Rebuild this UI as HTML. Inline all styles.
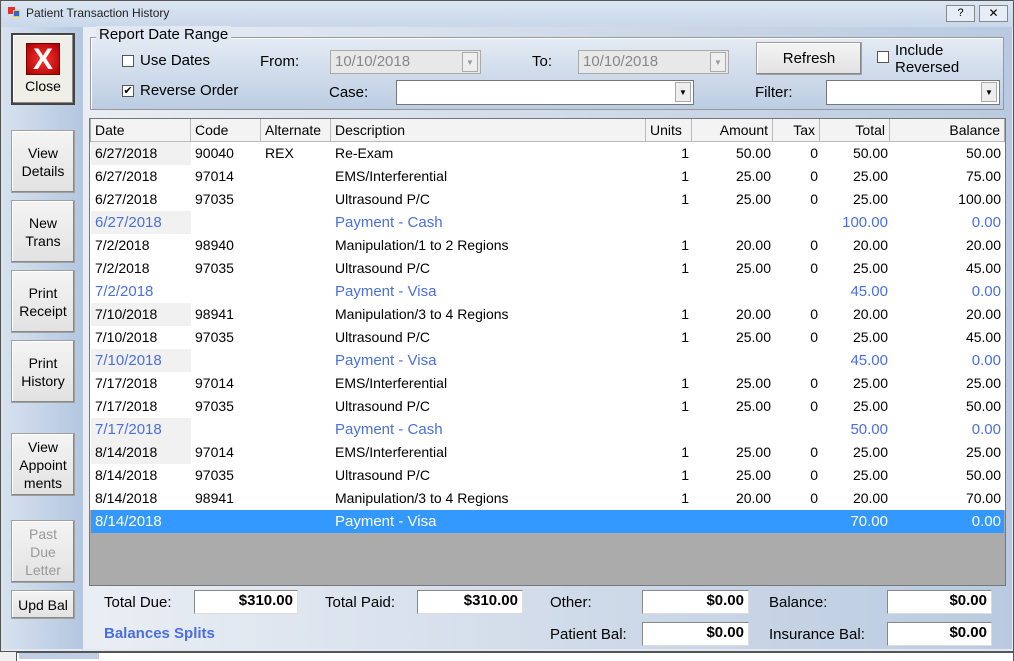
<!DOCTYPE html>
<html><head><style>
*{margin:0;padding:0;box-sizing:border-box}
body{width:1014px;height:661px;background:#f0f0f0;font-family:"Liberation Sans",sans-serif;font-size:14px;position:relative;overflow:hidden;color:#000}
.a{position:absolute}
.btn{position:absolute;background:linear-gradient(#f4f4f4,#e2e2e2);border:1px solid #a0a0a0;box-shadow:inset -1px -1px 0 #888,inset 1px 1px 0 #fff;text-align:center;font-size:14px;line-height:18px;display:flex;align-items:center;justify-content:center}
.cb{position:absolute;width:12px;height:12px;border:1px solid #555;background:#fff;font-size:11px;line-height:10px;text-align:center}
.box{position:absolute;background:#fff;border:1px solid #888;border-right-color:#ddd;border-bottom-color:#ddd;text-align:right;font-weight:bold;padding-right:4px;line-height:20px;font-size:15px}
.row{position:absolute;left:91px;width:913px;height:23px;line-height:23px;font-size:14px}
.row span{position:absolute;top:0;white-space:nowrap}
.r{text-align:right}
.pay{color:#4a6fe0}
.sel{background:#3399ff;color:#fff}
.hd span{position:absolute;top:0;height:23px;border-right:1px solid #bbb;line-height:23px;padding:0 4px}
.dd{position:absolute;width:16px;height:20px;right:2px;top:1px;border:1px solid #aaa;background:#eee;font-size:8px;text-align:center;line-height:20px}
</style></head><body>
<div class="a" style="left:0;top:0;width:1014px;height:652px;border:1px solid #555;background:#dfe8f3"></div>
<div class="a" style="left:1px;top:1px;width:1012px;height:26px;background:linear-gradient(#dbe6f3,#c9d8ea)"></div>
<div class="a" style="left:8px;top:7px;width:7px;height:7px;background:#d33"></div>
<div class="a" style="left:13px;top:10px;width:7px;height:7px;background:#36c;border:1px solid #fc0"></div>
<div class="a" style="left:26px;top:6px;font-size:12px;color:#222">Patient Transaction History</div>
<div class="a" style="left:946px;top:5px;width:29px;height:17px;border:1px solid #888;background:#e6edf6;font-size:11px;text-align:center;line-height:15px">?</div>
<div class="a" style="left:979px;top:5px;width:29px;height:17px;border:1px solid #888;background:#e6edf6;font-size:12px;text-align:center;line-height:15px">✕</div>
<!-- left panel -->
<div class="a" style="left:1px;top:27px;width:82px;height:622px;background:linear-gradient(90deg,#d8e2ef,#b3c7e0)"></div>
<!-- content gradient -->
<div class="a" style="left:83px;top:27px;width:929px;height:622px;background:linear-gradient(90deg,#eaeef4,#b9cae0)"></div>
<div class="btn" style="left:11px;top:33px;width:64px;height:72px;border:2px solid #444;flex-direction:column;background:#efefe8">
<div style="width:34px;height:32px;background:radial-gradient(#f33,#a00);color:#fff;font-weight:bold;font-size:30px;line-height:32px;border:1px solid #700">X</div><div style="margin-top:2px;font-size:14px">Close</div></div>
<div class="btn" style="left:11px;top:130px;width:64px;height:63px">View<br>Details</div>
<div class="btn" style="left:11px;top:200px;width:64px;height:63px">New<br>Trans</div>
<div class="btn" style="left:11px;top:270px;width:64px;height:63px">Print<br>Receipt</div>
<div class="btn" style="left:11px;top:340px;width:64px;height:63px">Print<br>History</div>
<div class="btn" style="left:11px;top:433px;width:64px;height:63px">View<br>Appoint<br>ments</div>
<div class="btn" style="left:11px;top:520px;width:64px;height:63px;color:#999">Past<br>Due<br>Letter</div>
<div class="btn" style="left:11px;top:590px;width:64px;height:29px">Upd Bal</div>
<!-- group -->
<div class="a" style="left:90px;top:37px;width:914px;height:73px;border:1px solid #999;box-shadow:1px 1px 0 #fff inset;background:linear-gradient(#e4ebf4,#bccde3)"></div>
<div class="a" style="left:96px;top:26px;padding:0 3px;font-size:15px;background:#e1e8f1">Report Date Range</div>
<div class="cb" style="left:122px;top:55px"></div><div class="a" style="left:140px;top:52px;font-size:15px">Use Dates</div>
<div class="cb" style="left:122px;top:85px">✔</div><div class="a" style="left:140px;top:82px;font-size:15px">Reverse Order</div>
<div class="a" style="left:260px;top:53px;font-size:15px">From:</div>
<div class="a" style="left:330px;top:50px;width:151px;height:24px;border:1px solid #aaa;background:#e8e8e8;color:#888;line-height:22px;padding-left:4px;font-size:15px">10/10/2018<div class="dd" style="color:#999">▼</div></div>
<div class="a" style="left:532px;top:53px;font-size:15px">To:</div>
<div class="a" style="left:578px;top:50px;width:151px;height:24px;border:1px solid #aaa;background:#e8e8e8;color:#888;line-height:22px;padding-left:4px;font-size:15px">10/10/2018<div class="dd" style="color:#999">▼</div></div>
<div class="a" style="left:329px;top:84px;font-size:15px">Case:</div>
<div class="a" style="left:396px;top:80px;width:298px;height:25px;border:1px solid #777;background:#fff"><div class="dd">▼</div></div>
<div class="btn" style="left:756px;top:42px;width:106px;height:33px;font-size:15px">Refresh</div>
<div class="cb" style="left:877px;top:51px"></div>
<div class="a" style="left:895px;top:42px;font-size:15px;line-height:17px">Include<br>Reversed</div>
<div class="a" style="left:755px;top:84px;font-size:15px">Filter:</div>
<div class="a" style="left:826px;top:80px;width:174px;height:25px;border:1px solid #777;background:#fff"><div class="dd">▼</div></div>
<!-- grid -->
<div class="a" style="left:89px;top:118px;width:917px;height:468px;border:1px solid #777;background:#ababab"></div>
<div class="a" style="left:90px;top:142px;width:915px;height:368px;background:#fff"></div>
<div class="row hd" style="top:119px;background:#f3f3f3;border-bottom:1px solid #bbb;height:23px">
<span style="left:0;width:100px">Date</span><span style="left:100px;width:70px">Code</span><span style="left:170px;width:70px">Alternate</span><span style="left:240px;width:315px">Description</span><span style="left:555px;width:46px">Units</span><span class="r" style="left:601px;width:81px">Amount</span><span class="r" style="left:682px;width:47px">Tax</span><span class="r" style="left:729px;width:70px">Total</span><span class="r" style="left:799px;width:114px;border:0">Balance</span></div>
<div id="rows"></div>
<script>
var d=[
["6/27/2018","90040","REX","Re-Exam","1","50.00","0","50.00","50.00",0,1],
["6/27/2018","97014","","EMS/Interferential","1","25.00","0","25.00","75.00",0,0],
["6/27/2018","97035","","Ultrasound P/C","1","25.00","0","25.00","100.00",0,0],
["6/27/2018","","","Payment - Cash","","","","100.00","0.00",1,1],
["7/2/2018","98940","","Manipulation/1 to 2 Regions","1","20.00","0","20.00","20.00",0,0],
["7/2/2018","97035","","Ultrasound P/C","1","25.00","0","25.00","45.00",0,0],
["7/2/2018","","","Payment - Visa","","","","45.00","0.00",1,0],
["7/10/2018","98941","","Manipulation/3 to 4 Regions","1","20.00","0","20.00","20.00",0,1],
["7/10/2018","97035","","Ultrasound P/C","1","25.00","0","25.00","45.00",0,0],
["7/10/2018","","","Payment - Visa","","","","45.00","0.00",1,1],
["7/17/2018","97014","","EMS/Interferential","1","25.00","0","25.00","25.00",0,0],
["7/17/2018","97035","","Ultrasound P/C","1","25.00","0","25.00","50.00",0,0],
["7/17/2018","","","Payment - Cash","","","","50.00","0.00",1,1],
["8/14/2018","97014","","EMS/Interferential","1","25.00","0","25.00","25.00",0,1],
["8/14/2018","97035","","Ultrasound P/C","1","25.00","0","25.00","50.00",0,0],
["8/14/2018","98941","","Manipulation/3 to 4 Regions","1","20.00","0","20.00","70.00",0,0],
["8/14/2018","","","Payment - Visa","","","","70.00","0.00",2,0]];
var h="";d.forEach(function(r,i){var c=r[9]==2?"row sel":r[9]==1?"row pay":"row";var fs=r[9]?"font-size:15px;":"";
h+='<div class="'+c+'" style="top:'+(142+i*23)+'px;'+fs+'">'+(r[10]&&r[9]!=2?'<span style="left:0;width:100px;height:23px;background:#f1f1f1"></span>':'')+
'<span style="left:4px">'+r[0]+'</span><span style="left:104px">'+r[1]+'</span><span style="left:174px">'+r[2]+'</span><span style="left:244px">'+r[3]+'</span>'+
'<span class="r" style="right:315px">'+r[4]+'</span><span class="r" style="right:233px">'+r[5]+'</span><span class="r" style="right:186px">'+r[6]+'</span><span class="r" style="right:116px">'+r[7]+'</span><span class="r" style="right:3px">'+r[8]+'</span></div>';});
document.getElementById("rows").innerHTML=h;
</script>
<!-- totals -->
<div class="a" style="left:104px;top:594px;font-size:15px">Total Due:</div>
<div class="box" style="left:194px;top:590px;width:104px;height:24px">$310.00</div>
<div class="a" style="left:325px;top:594px;font-size:15px">Total Paid:</div>
<div class="box" style="left:417px;top:590px;width:106px;height:24px">$310.00</div>
<div class="a" style="left:550px;top:594px;font-size:15px">Other:</div>
<div class="box" style="left:642px;top:590px;width:107px;height:24px">$0.00</div>
<div class="a" style="left:769px;top:594px;font-size:15px">Balance:</div>
<div class="box" style="left:887px;top:590px;width:105px;height:24px">$0.00</div>
<div class="a" style="left:104px;top:625px;font-size:15px;font-weight:bold;color:#4a6fe0">Balances Splits</div>
<div class="a" style="left:550px;top:626px;font-size:15px">Patient Bal:</div>
<div class="box" style="left:642px;top:622px;width:107px;height:24px">$0.00</div>
<div class="a" style="left:769px;top:626px;font-size:15px">Insurance Bal:</div>
<div class="box" style="left:887px;top:622px;width:105px;height:24px">$0.00</div>
<div class="a" style="left:16px;top:652px;width:998px;height:9px;border:1px solid #555;border-bottom:0;background:#fff"></div>
<div class="a" style="left:19px;top:653px;width:80px;height:6px;background:#bfcee2"></div>
</body></html>
